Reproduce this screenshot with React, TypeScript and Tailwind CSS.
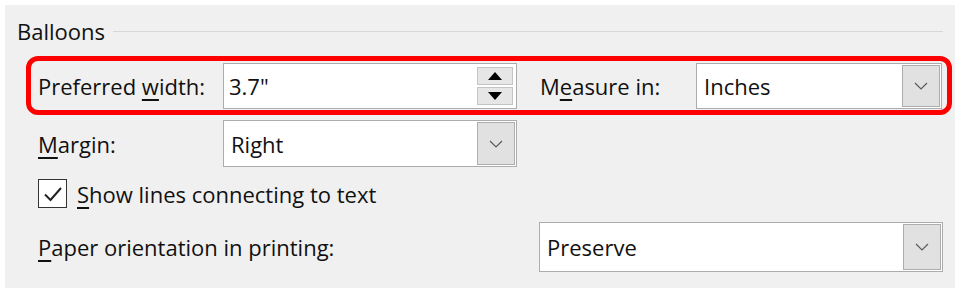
import React from 'react';

const font = { fontFamily: '"Segoe UI", "Open Sans", "Noto Sans", sans-serif' };

const Chevron: React.FC = () => (
  <svg width="14" height="8" viewBox="0 0 14 8" fill="none">
    <path d="M1 1l6 6 6-6" stroke="#5a5a5a" strokeWidth="1.2" />
  </svg>
);

const Select: React.FC<{ value: string; className: string }> = ({ value, className }) => (
  <div className={`flex items-stretch border border-[#acacac] bg-white p-px ${className}`}>
    <div className="flex flex-1 items-center pl-[6px] text-[22px] text-[#111]">{value}</div>
    <div className="flex w-[38px] items-center justify-center border border-[#adadad] bg-[#e1e1e1]">
      <Chevron />
    </div>
  </div>
);

const Spin: React.FC<{ value: string }> = ({ value }) => (
  <div className="flex h-[46px] w-[294px] items-stretch border border-[#acacac] bg-white py-[3px] pr-[3px]">
    <div className="flex flex-1 items-center pl-[5px] text-[22px] text-[#111]">{value}</div>
    <div className="flex w-[36px] flex-col gap-[2px]">
      <div className="flex flex-1 items-center justify-center border border-[#c4c4c4] bg-[#e6e6e6]">
        <svg width="14" height="8" viewBox="0 0 14 8"><path d="M0 8L7 0l7 8z" fill="#000" /></svg>
      </div>
      <div className="flex flex-1 items-center justify-center border border-[#c4c4c4] bg-[#e6e6e6]">
        <svg width="14" height="8" viewBox="0 0 14 8"><path d="M0 0h14L7 8z" fill="#000" /></svg>
      </div>
    </div>
  </div>
);

export default function App() {
  return (
    <div className="h-[288px] w-[958px] bg-white pl-[5px] pr-[3px] pt-[5px]" style={font}>
      <div className="h-full bg-[#f0f0f0] pl-[12px] pt-[12px] text-[22px] leading-none text-[#111]">
        <div className="flex h-[28px] items-center">
          <span>Balloons</span>
          <div className="ml-[8px] mr-[12px] h-px flex-1 bg-[#d8d8d8]" />
        </div>

        <div className="ml-[9px] mt-[11px] flex h-[59px] w-[926px] items-center rounded-[12px] border-[5px] border-[#ff0000] pl-[7px]">
          <span className="w-[185px]">
            Preferred <u className="underline-offset-4">w</u>idth:
          </span>
          <Spin value={'3.7"'} />
          <span className="ml-[23px] w-[156px]">
            M<u className="underline-offset-4">e</u>asure in:
          </span>
          <Select value="Inches" className="h-[46px] w-[246px]" />
        </div>

        <div className="ml-[21px] mt-[5px] flex h-[47px] items-center">
          <span className="w-[185px]">
            <u className="underline-offset-4">M</u>argin:
          </span>
          <Select value="Right" className="h-[47px] w-[294px]" />
        </div>

        <div className="ml-[21px] mt-[12px] flex h-[29px] items-center">
          <div className="flex h-[29px] w-[29px] items-center justify-center border border-[#333] bg-white">
            <svg width="20" height="16" viewBox="0 0 20 16" fill="none">
              <path d="M2 8.5l5.5 5.5L18 2" stroke="#222" strokeWidth="2" />
            </svg>
          </div>
          <span className="ml-[10px]">
            <u className="underline-offset-4">S</u>how lines connecting to text
          </span>
        </div>

        <div className="ml-[21px] mt-[14px] flex h-[50px] items-center">
          <span className="w-[501px]">
            <u className="underline-offset-4">P</u>aper orientation in printing:
          </span>
          <Select value="Preserve" className="h-[50px] w-[404px]" />
        </div>
      </div>
    </div>
  );
}
